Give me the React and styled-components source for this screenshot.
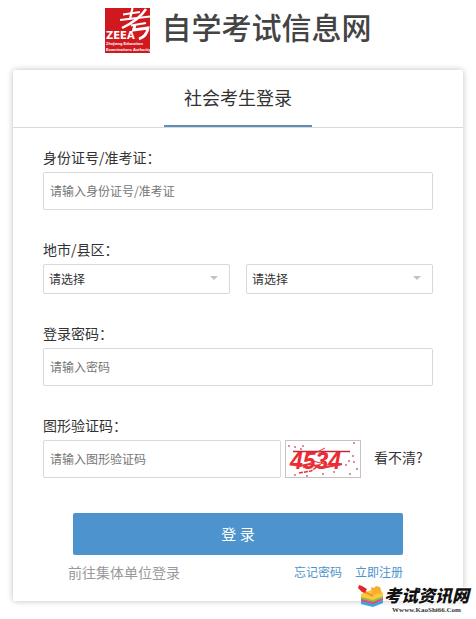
import React, { useState } from 'react';
import styled, { createGlobalStyle } from 'styled-components';

const CAPTCHA_SPECKS = [
  [3, 5], [9, 6], [17, 5], [15, 8], [68, 2], [67, 15], [63, 20], [71, 28],
  [68, 21], [48, 31], [37, 33], [9, 34], [21, 35], [64, 33], [33, 11], [60, 24],
];

const ZeeaLogo = () => (
  <svg width="45" height="45" viewBox="0 0 45 45" role="img" aria-label="ZEEA">
    <rect width="45" height="45" fill="#d0191f" />
    <g fill="none" stroke="#fff">
      <path d="M18 6.5 35 4" strokeWidth="1.8" />
      <path d="M27.5 0 25 11" strokeWidth="2.2" />
      <path d="M15 12 45 8.5" strokeWidth="2.2" />
      <path d="M41 1Q34 12 17 20" strokeWidth="2.4" />
      <path d="M26 17.5 41 15" strokeWidth="2" />
      <path d="M30 17 28.5 22 43 20Q42 28 34 31" strokeWidth="2.8" />
    </g>
    <LogoName x="1" y="31">ZEEA</LogoName>
    <LogoCaption x="1" y="37">Zhejiang Education</LogoCaption>
    <LogoCaption x="1" y="43">Examinations Authority</LogoCaption>
  </svg>
);

const CaptchaImage = () => (
  <svg width="74" height="36" viewBox="0 0 74 36" aria-hidden="true">
    <CaptchaDigits x="4" y="28">4534</CaptchaDigits>
    <g fill="none" stroke="#e8303a">
      <path d="M4 23 14 25 24 23 36 27 56 23" strokeWidth="2" />
      <path d="M21 15 31 11 39 7M17 27 27 20 42 24" />
      <path d="M13 32 25 30 35 23 41 12" strokeWidth="1.5" strokeDasharray="4 1" />
      <path d="M7 10.5H64" stroke="#c4283c" strokeWidth="1.6" />
    </g>
    {CAPTCHA_SPECKS.map(([x, y]) => (
      <circle key={`${x}-${y}`} cx={x} cy={y} r="0.9" fill="#c95a78" />
    ))}
  </svg>
);

const BooksIcon = () => (
  <svg width="26" height="24" viewBox="0 0 26 24" aria-hidden="true">
    <path d="M3 16 14 19 25 16V19L15 23 3 20Z" fill="#39a5dc" />
    <path d="M3 14 15 17 25 14V16L15 20 3 17Z" fill="#e54787" />
    <path d="M3 12 15 15 25 12V14L15 18 3 15Z" fill="#8fbd3c" />
    <path d="M3 10 13 6 25 9V12L15 16 3 13Z" fill="#fcc93a" />
    <path d="M13 3 16 4 18 2 22 3 24 9 14 11Z" fill="#f6b02c" />
    <path d="M5 7 15 12" stroke="#f0962a" strokeWidth="2" />
    <path d="M1 1 4 2 9 5 7 9 4 8 0 4Z" fill="#e2272b" />
  </svg>
);

const SelectBox = ({ id, label }) => (
  <SelectWrap>
    <Select id={id} aria-label={label} defaultValue="">
      <option value="">请选择</option>
    </Select>
  </SelectWrap>
);

const App = () => {
  const [form, setForm] = useState({ idNumber: '', password: '', captcha: '' });

  const handleChange = (e) => {
    setForm({ ...form, [e.target.name]: e.target.value });
  };

  const handleSubmit = (e) => {
    e.preventDefault();
  };

  return (
    <Page>
      <GlobalStyle />
      <SiteHeader>
        <ZeeaLogo />
        <SiteTitle>自学考试信息网</SiteTitle>
      </SiteHeader>

      <Card>
        <CardHeader>
          <CardTab type="button">社会考生登录</CardTab>
        </CardHeader>

        <LoginForm onSubmit={handleSubmit}>
          <Field>
            <Label htmlFor="idNumber">身份证号/准考证：</Label>
            <Input
              id="idNumber"
              name="idNumber"
              type="text"
              value={form.idNumber}
              onChange={handleChange}
              placeholder="请输入身份证号/准考证"
            />
          </Field>

          <Field>
            <Label htmlFor="city">地市/县区：</Label>
            <FieldRow $gap={16}>
              <SelectBox id="city" label="地市" />
              <SelectBox id="county" label="县区" />
            </FieldRow>
          </Field>

          <Field>
            <Label htmlFor="password">登录密码：</Label>
            <Input
              id="password"
              name="password"
              type="password"
              value={form.password}
              onChange={handleChange}
              placeholder="请输入密码"
            />
          </Field>

          <Field>
            <Label htmlFor="captcha">图形验证码：</Label>
            <FieldRow $gap={4}>
              <Input
                id="captcha"
                name="captcha"
                type="text"
                value={form.captcha}
                onChange={handleChange}
                placeholder="请输入图形验证码"
              />
              <Captcha>
                <CaptchaImage />
              </Captcha>
              <RefreshLink href="#captcha">看不清?</RefreshLink>
            </FieldRow>
          </Field>

          <SubmitButton type="submit">登 录</SubmitButton>

          <FormFooter>
            <GroupLink href="#group">前往集体单位登录</GroupLink>
            <AccountLinks>
              <AccountLink href="#forgot">忘记密码</AccountLink>
              <AccountLink href="#register">立即注册</AccountLink>
            </AccountLinks>
          </FormFooter>
        </LoginForm>

        <Watermark>
          <BooksIcon />
          <WatermarkText>
            <WatermarkName>考试资讯网</WatermarkName>
            <WatermarkUrl>Wwww.KaoShi66.Com</WatermarkUrl>
          </WatermarkText>
        </Watermark>
      </Card>
    </Page>
  );
};

const GlobalStyle = createGlobalStyle`
  * {
    box-sizing: border-box;
  }

  body {
    margin: 0;
    background: #fff;
    color: #333;
    font-family: 'Noto Sans CJK SC', sans-serif;
    font-size: 14px;
  }

  button, input, select {
    font-family: inherit;
  }

  a {
    text-decoration: none;
  }
`;

const Page = styled.div`
  padding: 8px 13px 18px;
`;

const SiteHeader = styled.header`
  display: flex;
  justify-content: center;
  gap: 12px;
  height: 62px;
`;

const SiteTitle = styled.h1`
  margin: 0;
  color: #444;
  font-size: 30px;
  font-weight: 500;
  line-height: 36px;
`;

const LogoName = styled.text`
  fill: #fff;
  font-family: 'DejaVu Sans', sans-serif;
  font-size: 10px;
  font-weight: bold;
`;

const LogoCaption = styled.text`
  fill: #fff;
  font-family: 'Liberation Sans', sans-serif;
  font-size: 4px;
  font-weight: bold;
`;

const Card = styled.main`
  position: relative;
  background: #fff;
  border-radius: 2px;
  box-shadow: 0 0 6px rgba(0, 0, 0, 0.25);
`;

const CardHeader = styled.div`
  display: flex;
  justify-content: center;
  height: 58px;
  border-bottom: 1px solid #d5dade;
`;

const CardTab = styled.button`
  width: 148px;
  height: 57px;
  padding: 0 0 2px;
  background: none;
  border: none;
  border-bottom: 2px solid #5f8fb8;
  color: #333;
  font-size: 18px;
  cursor: pointer;
`;

const LoginForm = styled.form`
  padding: 16px 30px 12px;
`;

const Field = styled.div`
  margin-bottom: 26px;
`;

const FieldRow = styled.div`
  display: flex;
  gap: ${({ $gap }) => $gap}px;
`;

const Label = styled.label`
  display: block;
  padding-bottom: 2px;
  line-height: 26px;
`;

const Input = styled.input`
  display: block;
  flex: 1;
  width: 100%;
  min-width: 0;
  height: 38px;
  padding: 0 6px 2px;
  background: #fff;
  border: 1px solid #d9d9d9;
  border-radius: 2px;
  color: #333;
  font-size: 12px;

  &::placeholder {
    color: #757575;
  }

  &:focus {
    border-color: #4d93cd;
    outline: none;
  }
`;

const SelectWrap = styled.div`
  position: relative;
  flex: 1;

  &::after {
    content: '';
    position: absolute;
    top: 12px;
    right: 12px;
    border: 4px solid transparent;
    border-top-color: #c2c2c2;
    pointer-events: none;
  }
`;

const Select = styled.select`
  display: block;
  width: 100%;
  height: 30px;
  padding: 0 5px 2px;
  appearance: none;
  background: #fff;
  border: 1px solid #d9d9d9;
  border-radius: 2px;
  color: #333;
  font-size: 12px;
`;

const Captcha = styled.div`
  width: 76px;
  height: 38px;
  border: 1px solid #c4c4c4;
`;

const CaptchaDigits = styled.text`
  fill: #ee2a30;
  font-family: 'Liberation Sans', sans-serif;
  font-size: 23px;
  font-weight: bold;
  font-style: italic;
`;

const RefreshLink = styled.a`
  width: 68px;
  padding-left: 9px;
  color: #333;
  line-height: 34px;
`;

const SubmitButton = styled.button`
  display: block;
  width: calc(100% - 60px);
  height: 42px;
  margin: 35px auto 0;
  padding: 0 0 2px;
  background: #4d93cd;
  border: none;
  border-radius: 2px;
  color: #fff;
  font-size: 15px;
  cursor: pointer;
`;

const FormFooter = styled.div`
  display: flex;
  justify-content: space-between;
  padding: 0 30px 0 25px;
  line-height: 34px;
`;

const GroupLink = styled.a`
  color: #999;
`;

const AccountLinks = styled.div`
  display: flex;
  gap: 13px;
`;

const AccountLink = styled.a`
  color: #4d93cd;
  font-size: 12px;
`;

const Watermark = styled.div`
  position: absolute;
  right: -6px;
  bottom: -14px;
  display: flex;
`;

const WatermarkText = styled.div`
  display: flex;
  flex-direction: column;
  align-items: center;
  text-shadow: 0 0 2px #fff, 1px 1px 1px #fff, -1px -1px 1px #fff;
`;

const WatermarkName = styled.strong`
  color: #111;
  font-size: 17px;
  font-style: italic;
  font-weight: 900;
  line-height: 21px;
`;

const WatermarkUrl = styled.span`
  color: #333;
  font-family: 'Liberation Serif', serif;
  font-size: 7px;
  font-weight: bold;
  line-height: 10px;
`;

export default App;
